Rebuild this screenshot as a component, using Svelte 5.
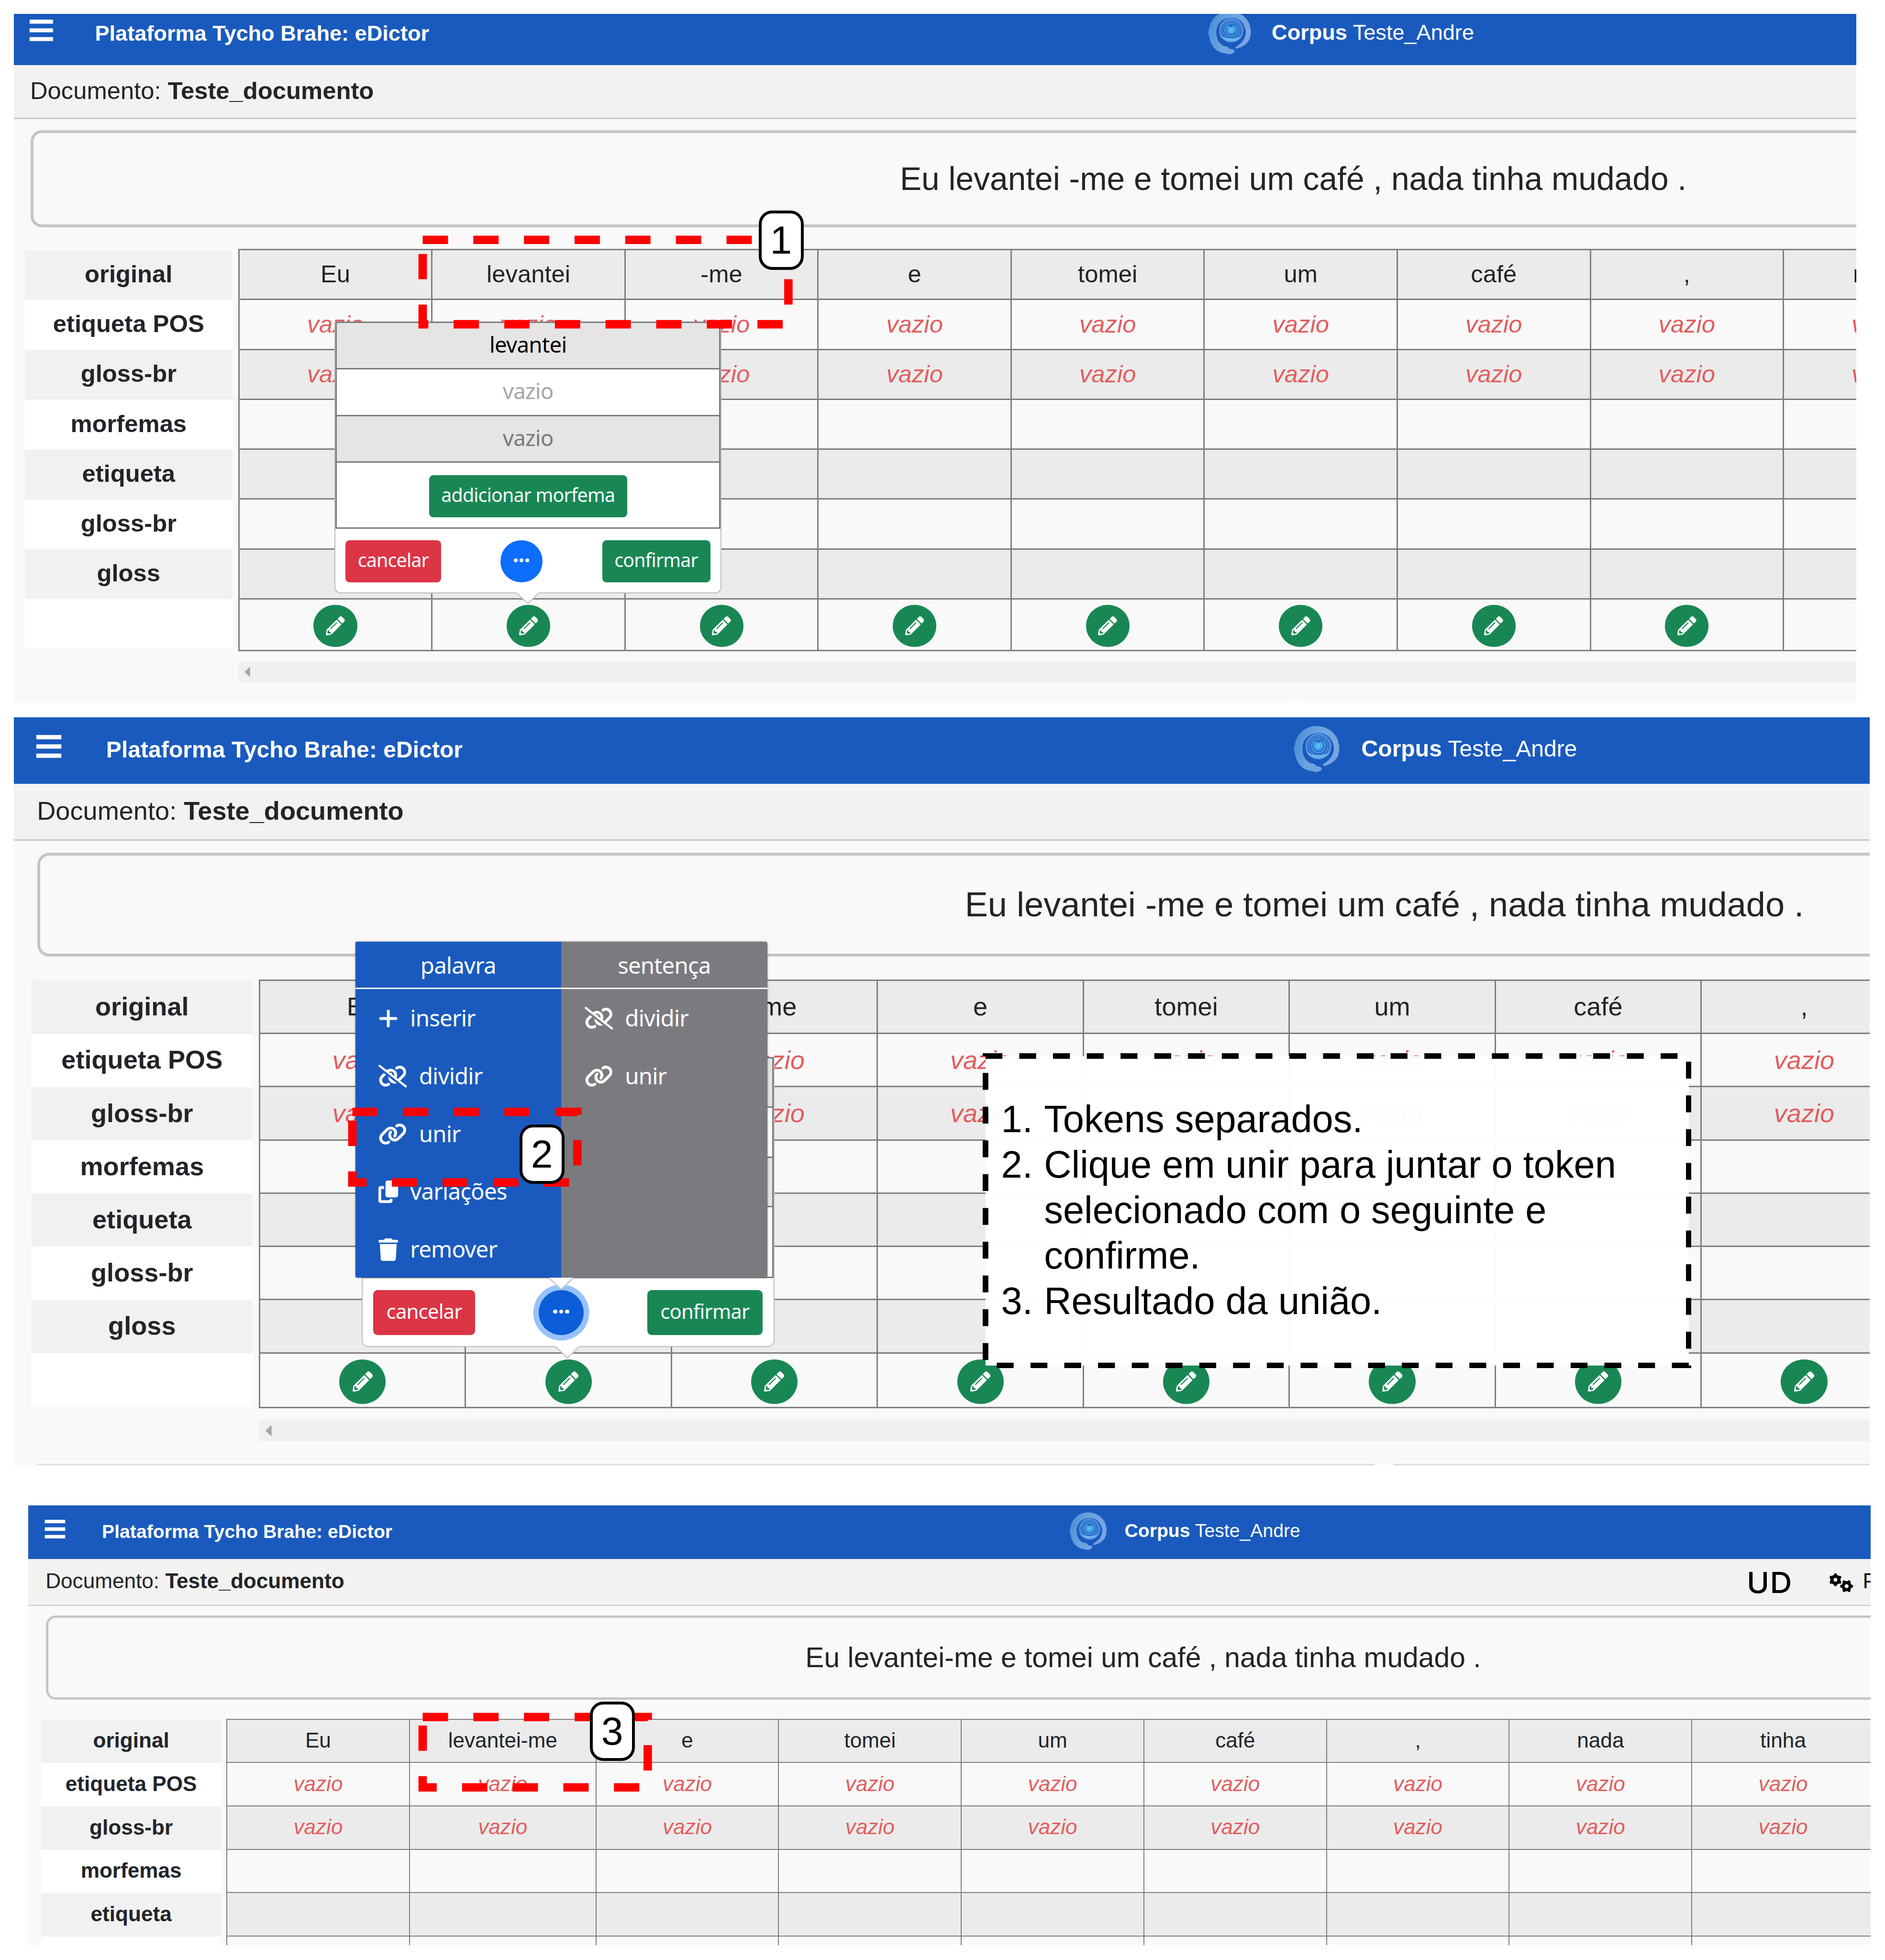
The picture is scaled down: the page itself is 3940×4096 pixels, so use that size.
<script>
  const rows = ['original', 'etiqueta POS', 'gloss-br', 'morfemas', 'etiqueta', 'gloss-br', 'gloss', ''];
  const split = ['Eu', 'levantei', '-me', 'e', 'tomei', 'um', 'café', ',', 'nada'];
  const joined = ['Eu', 'levantei-me', 'e', 'tomei', 'um', 'café', ',', 'nada', 'tinha'];

  const panels = [
    { id: 'first', sentence: 'Eu levantei -me e tomei um café , nada tinha mudado .', tokens: split, popup: true },
    { id: 'second', sentence: 'Eu levantei -me e tomei um café , nada tinha mudado .', tokens: split, popup: true, menu: true },
    { id: 'third', sentence: 'Eu levantei-me e tomei um café , nada tinha mudado .', tokens: joined, tools: true }
  ];

  const menuWord = [
    ['plus', 'inserir'],
    ['unlink', 'dividir'],
    ['link', 'unir'],
    ['copy', 'variações'],
    ['trash', 'remover']
  ];
  const menuSentence = [
    ['unlink', 'dividir'],
    ['link', 'unir']
  ];

  const linkPath =
    'M579.8 267.7c56.5-56.5 56.5-148 0-204.5c-50-50-128.8-56.5-186.3-15.4l-1.6 1.1c-14.4 10.3-17.7 30.3-7.4 44.6s30.3 17.7 44.6 7.4l1.6-1.1c32.1-22.9 76-19.3 103.8 8.6c31.5 31.5 31.5 82.5 0 114L422.3 334.8c-31.5 31.5-82.5 31.5-114 0c-27.9-27.9-31.5-71.8-8.6-103.8l1.1-1.6c10.3-14.4 6.9-34.4-7.4-44.6s-34.4-6.9-44.6 7.4l-1.1 1.6C206.5 251.2 213 330 263 380c56.5 56.5 148 56.5 204.5 0L579.8 267.7zM60.2 244.3c-56.5 56.5-56.5 148 0 204.5c50 50 128.8 56.5 186.3 15.4l1.6-1.1c14.4-10.3 17.7-30.3 7.4-44.6s-30.3-17.7-44.6-7.4l-1.6 1.1c-32.1 22.9-76 19.3-103.8-8.6C74 372 74 321 105.5 289.5L217.7 177.2c31.5-31.5 82.5-31.5 114 0c27.9 27.9 31.5 71.8 8.6 103.9l-1.1 1.6c-10.3 14.4-6.9 34.4 7.4 44.6s34.4 6.9 44.6-7.4l1.1-1.6C433.5 260.8 427 182 377 132c-56.5-56.5-148-56.5-204.5 0L60.2 244.3z';

  const marks = [
    { x: 1202, y: 682, w: 1040, h: 240 },
    { x: 1002, y: 3161.5, w: 640, h: 200.5 },
    { x: 1202, y: 4882, w: 640, h: 200 }
  ];

  const teeth = [0, 60, 120, 180, 240, 300];
</script>

{#snippet icon(name)}
  {#if name === 'plus'}
    <svg class="ico" viewBox="0 0 448 512"><path d="M256 80c0-17.7-14.3-22-32-22s-32 4.3-32 22V224H48c-17.7 0-32 14.3-32 32s14.3 32 32 32H192V432c0 17.7 14.3 22 32 22s32-4.3 32-22V288H400c17.7 0 32-14.3 32-32s-14.3-32-32-32H256V80z" /></svg>
  {:else if name === 'copy'}
    <svg class="ico" viewBox="0 0 448 512"><path d="M208 0H332.1c12.7 0 24.9 5.1 33.9 14.1l67.9 67.9c9 9 14.1 21.2 14.1 33.9V336c0 26.5-21.5 48-48 48H208c-26.5 0-48-21.5-48-48V48c0-26.5 21.5-48 48-48zM48 128h80v64H64V448H256V416h64v48c0 26.5-21.5 48-48 48H48c-26.5 0-48-21.5-48-48V176c0-26.5 21.5-48 48-48z" /></svg>
  {:else if name === 'trash'}
    <svg class="ico" viewBox="0 0 448 512"><path d="M135.2 17.7L128 32H32C14.3 32 0 46.3 0 64S14.3 96 32 96H416c17.7 0 32-14.3 32-32s-14.3-32-32-32H320l-7.2-14.3C307.4 6.8 296.3 0 284.2 0H163.8c-12.1 0-23.2 6.8-28.6 17.7zM416 128H32L53.2 467c1.6 25.3 22.6 45 47.9 45H346.9c25.3 0 46.3-19.7 47.9-45L416 128z" /></svg>
  {:else}
    <svg class="ico wide" viewBox="0 0 640 512">
      <path d={linkPath} />
      {#if name === 'unlink'}
        <path class="halo" d="M2 56L592 520" />
        <path class="slash" d="M24 24L616 488" />
      {/if}
    </svg>
  {/if}
{/snippet}

{#snippet tip()}
  <svg class="tip" viewBox="0 0 66 34"><path class="tipfill" d="M0 0L33 31L66 0z" /><path class="tipline" d="M1 1L33 31.5L65 1" /></svg>
{/snippet}

{#snippet gear(x, y, turn)}
  <g transform="translate({x} {y}) rotate({turn})">
    <circle r="11.5" fill="none" stroke="#000" stroke-width="10.5" />
    {#each teeth as a}
      <rect x="-4.5" y="-21" width="9" height="8" rx="3" transform="rotate({a})" />
    {/each}
  </g>
{/snippet}

<main class="stage">
  {#each panels as p}
    <section class="panel {p.id}">
      <div class="view">
        <header class="topbar">
          <svg class="burger" viewBox="0 0 70 64"><path d="M0 6H70M0 32H70M0 58H70" /></svg>
          <span class="title">Plataforma Tycho Brahe: eDictor</span>
          <svg class="logo" viewBox="0 0 510 510">
            <defs>
              <linearGradient id="sw-{p.id}" x1="0" y1="0" x2="1" y2="0.3">
                <stop offset="0" stop-color="#4489d2" />
                <stop offset="0.5" stop-color="#6ba3e0" />
                <stop offset="1" stop-color="#7ba3e2" />
              </linearGradient>
              <radialGradient id="core-{p.id}">
                <stop offset="0" stop-color="#6cc4f2" />
                <stop offset="0.7" stop-color="#35a0e6" />
                <stop offset="1" stop-color="#3d8bd8" stop-opacity="0" />
              </radialGradient>
            </defs>
            <path
              fill="url(#sw-{p.id})"
              d="M298 425C290 440 262 452 245 450C225 442 205 444 180 436C120 418 78 365 68 290C62 270 52 250 66 222C80 120 160 58 252 58C355 60 430 130 440 205C452 235 445 290 432 318C410 360 365 388 318 398C300 398 302 388 320 375C370 345 402 300 400 240C390 165 340 118 268 118C190 118 135 170 132 245C130 310 158 355 200 375C225 375 245 385 252 402C270 404 290 402 298 425z"
            />
            <circle cx="268" cy="232" r="102" fill="none" stroke="#4f90dc" stroke-width="18" />
            <circle cx="268" cy="230" r="80" fill="none" stroke="#4488d8" stroke-width="14" />
            <circle cx="268" cy="228" r="58" fill="none" stroke="#4a93de" stroke-width="14" />
            <path d="M165 275C195 345 330 360 368 275C340 310 215 320 165 275z" fill="#6cb2ec" />
            <circle cx="268" cy="225" r="54" fill="url(#core-{p.id})" />
            <path d="M240 178H305V188H278V200H254V188H240z" fill="#1f63c4" />
          </svg>
          <span class="corpus"><b>Corpus</b> Teste_Andre</span>
        </header>

        <div class="docbar">
          <span>Documento: <b>Teste_documento</b></span>
          {#if p.tools}
            <span class="ud">UD</span>
            <svg class="gears" viewBox="0 0 80 66">
              {@render gear(21, 22.5, 0)}
              {@render gear(57.5, 43.5, 30)}
            </svg>
            <span class="pref">P</span>
          {/if}
        </div>

        <div class="sentence">{p.sentence}</div>

        <div class="board">
          <div class="labels">
            {#each rows as r}
              <div class="label">{r}</div>
            {/each}
          </div>
          <div class="tablewrap">
            <div class="table">
              {#each p.tokens as t}
                <div class="col" class:long={t === 'levantei-me'}>
                  <div class="cell">{t}</div>
                  <div class="cell empty">vazio</div>
                  <div class="cell empty">vazio</div>
                  <div class="cell"></div>
                  <div class="cell"></div>
                  <div class="cell"></div>
                  <div class="cell"></div>
                  <div class="cell action">
                    <span class="edit">
                      <svg viewBox="0 0 512 512"><path d="M497.9 142.1l-46.1 46.1c-4.7 4.7-12.3 4.7-17 0l-111-111c-4.7-4.7-4.7-12.3 0-17l46.1-46.1c18.7-18.7 49.1-18.7 67.9 0l60.1 60.1c18.8 18.7 18.8 49.1 0 67.9zM284.2 99.8L21.6 362.4.4 483.9c-2.9 16.4 11.4 30.6 27.8 27.8l121.5-21.3 262.6-262.6c4.7-4.7 4.7-12.3 0-17l-111-111c-4.8-4.7-12.4-4.7-17.1 0zM124.1 339.9c-5.5-5.5-5.5-14.3 0-19.8l154-154c5.5-5.5 14.3-5.5 19.8 0s5.5 14.3 0 19.8l-154 154c-5.5 5.5-14.3 5.5-19.8 0zM88 424h48v36.3l-64.5 11.3-31.1-31.1L51.7 376H88v48z" /></svg>
                    </span>
                  </div>
                </div>
              {/each}
            </div>
            <div class="scroll"><svg viewBox="0 0 16 30"><path d="M16 0V30L0 15z" /></svg></div>

            {#if p.popup}
              <div class="popup">
                <div class="prow head">levantei</div>
                <div class="prow light">vazio</div>
                <div class="prow dim">vazio</div>
                <div class="prow add"><span class="btn ok">addicionar morfema</span></div>
                <div class="foot">
                  <span class="btn no">cancelar</span>
                  <span class="more" class:focused={p.menu}><i></i><i></i><i></i></span>
                  <span class="btn ok">confirmar</span>
                </div>
                {@render tip()}
              </div>
            {/if}

            {#if p.menu}
              <div class="menu">
                <div class="side word">
                  <div class="mhead">palavra</div>
                  {#each menuWord as [i, label]}
                    <div class="item">{@render icon(i)}<span>{label}</span></div>
                  {/each}
                </div>
                <div class="side sent">
                  <div class="mhead">sentença</div>
                  {#each menuSentence as [i, label]}
                    <div class="item">{@render icon(i)}<span>{label}</span></div>
                  {/each}
                </div>
                {@render tip()}
              </div>
            {/if}
          </div>
        </div>
        <div class="nextbox"><span></span></div>
      </div>
    </section>
  {/each}

  <svg class="marks" viewBox="0 0 5360 5572">
    {#each marks as m}
      <path d="M{m.x} {m.y}h{m.w}v{m.h}h{-m.w}z" />
    {/each}
  </svg>

  <aside class="note">
    <svg viewBox="0 0 2016 896"><path d="M8 8H2008V888H8z" /></svg>
    <ol>
      <li><span>1.</span><span>Tokens separados.</span></li>
      <li><span>2.</span><span>Clique em unir para juntar o token<br />selecionado com o seguinte e<br />confirme.</span></li>
      <li><span>3.</span><span>Resultado da união.</span></li>
    </ol>
  </aside>

  <div class="badge b1">1</div>
  <div class="badge b2">2</div>
  <div class="badge b3">3</div>
</main>

<style>
  :global(body) {
    margin: 0;
    background: #fff;
    overflow: hidden;
  }

  .stage {
    position: relative;
    zoom: 0.735;
    width: 5360px;
    height: 5572px;
    overflow: hidden;
    background: #fff;
    font-family: 'Liberation Sans', Arial, sans-serif;
    color: #212529;
  }

  .stage * {
    box-sizing: border-box;
  }

  .panel {
    overflow: hidden;
    background: #f9f9f9;
  }

  .first {
    width: 5239px;
    height: 1959px;
    margin: 40px 0 41px 40px;
  }

  .second {
    width: 5277px;
    height: 2128px;
    margin: 0 0 112px 40px;
  }

  .third {
    width: 5240px;
    height: 1250px;
    margin-left: 80px;
  }

  .view {
    width: 7400px;
    padding-left: 62px;
  }

  .first .view {
    margin: -30.7px 0 0 -15.4px;
  }

  .second .view {
    zoom: 1.0667;
  }

  .third .view {
    zoom: 0.869;
    margin-left: -4px;
  }

  .topbar {
    display: flex;
    align-items: flex-start;
    height: 176.2px;
    margin-left: -62px;
    padding-left: 58px;
    background: #1a5abe;
    color: #fff;
    font-size: 61.4px;
    line-height: 70.7px;
    white-space: nowrap;
  }

  .burger {
    flex: none;
    width: 69px;
    height: 61px;
    margin-top: 47px;
  }

  .burger path {
    stroke: #fff;
    stroke-width: 12;
  }

  .title {
    flex: none;
    width: 3148px;
    margin: 50.5px 0 0 118.5px;
    font-weight: 700;
  }

  .logo {
    flex: none;
    width: 159.4px;
    height: 159.4px;
    margin-top: 4.7px;
  }

  .corpus {
    margin: 48px 0 0 39px;
  }

  .docbar {
    display: flex;
    height: 153px;
    margin-left: -62px;
    padding: 33px 0 0 61px;
    background: #f3f2f0;
    border-bottom: 4.2px solid #c9c8c6;
    font-size: 69.1px;
    line-height: 79.6px;
    white-space: nowrap;
  }

  .ud {
    width: 160px;
    margin-left: 4589px;
    font: 500 95px/90px Inter, sans-serif;
    letter-spacing: 2px;
    color: #000;
    transform: scaleX(1.05);
    transform-origin: left;
  }

  .gears {
    width: 80px;
    height: 66px;
    margin: 12px 0 0 110px;
  }

  .pref {
    margin-left: 30px;
    color: #000;
  }

  .sentence {
    width: 7182px;
    height: 276.5px;
    margin-top: 31px;
    padding-top: 77.5px;
    border: 8.2px solid #c6c5c4;
    border-radius: 32px;
    font-size: 92.1px;
    line-height: 106px;
    text-align: center;
    white-space: nowrap;
  }

  .board {
    display: flex;
    margin: 61.5px 0 0 -15.8px;
  }

  .labels {
    width: 589.8px;
    padding-top: 3.5px;
    margin-right: 16.6px;
  }

  .label {
    height: 141.8px;
    padding-top: 29px;
    background: #fff;
    font-size: 69.1px;
    font-weight: 700;
    line-height: 79.6px;
    text-align: center;
  }

  .label:nth-child(odd) {
    background: #f1f1f1;
  }

  .tablewrap {
    position: relative;
    width: 6600px;
  }

  .table {
    display: flex;
    border-left: 4.2px solid #7f7f82;
    border-top: 4.2px solid #7f7f82;
  }

  .col {
    flex: none;
    width: 549.05px;
  }

  .third .col {
    width: 597.7px;
  }

  .third .col.long {
    width: 610.5px;
  }

  .cell {
    height: 141.9px;
    padding-top: 29px;
    border-right: 4.2px solid #7f7f82;
    border-bottom: 4.2px solid #7f7f82;
    font-size: 69.1px;
    line-height: 79.6px;
    text-align: center;
  }

  .cell:nth-child(odd) {
    background: #ebebeb;
  }

  .cell:nth-child(even) {
    background: #f9f9f9;
  }

  .empty {
    color: #e35d5d;
    font-style: italic;
  }

  .action {
    display: flex;
    justify-content: center;
    height: 146.6px;
    padding-top: 15.5px;
  }

  .edit {
    display: flex;
    align-items: center;
    justify-content: center;
    width: 124px;
    height: 119.5px;
    border-radius: 50%;
    background: #198754;
  }

  .edit svg {
    width: 54px;
    height: 54px;
    fill: #fff;
  }

  .scroll {
    height: 57px;
    margin-top: 30px;
    padding: 14px 0 0 18px;
    background: #f0f0f0;
  }

  .scroll svg {
    display: block;
    width: 16px;
    height: 30px;
    fill: #a3a3a3;
  }

  .nextbox {
    width: 7180px;
    height: 60px;
    margin-top: 61px;
    border-top: 4.2px solid #dedede;
    text-align: center;
  }

  .nextbox span {
    display: block;
    width: 50px;
    height: 12px;
    margin: -6px auto 0;
    background: #fdfdfd;
  }

  .popup {
    position: absolute;
    left: 274.5px;
    top: 207.5px;
    width: 1100px;
    height: 772.5px;
    background: #fff;
    border: 3px solid #bdbdbd;
    border-radius: 4px 4px 18px 18px;
    border-top: 0;
    font-family: 'Noto Sans', sans-serif;
    font-size: 62px;
    letter-spacing: -1px;
    text-align: center;
  }

  .prow {
    height: 134px;
    border: solid #7c7c80;
    border-width: 4.2px 4.2px 0;
    line-height: 120px;
  }

  .head {
    height: 131px;
    background: #e5e5e5;
    color: #000;
  }

  .light {
    color: #a6a6a6;
  }

  .dim {
    height: 131px;
    background: #e5e5e5;
    color: #7a7a7a;
  }

  .add {
    display: flex;
    align-items: center;
    justify-content: center;
    height: 193px;
    padding-top: 7px;
    border-bottom-width: 4.2px;
  }

  .btn {
    height: 119.5px;
    padding: 0 35px;
    border-radius: 12px;
    color: #fff;
    font-size: 53.5px;
    letter-spacing: -1.1px;
    line-height: 112px;
    white-space: nowrap;
  }

  .ok {
    background: #198754;
  }

  .no {
    background: #dc3545;
  }

  .foot {
    display: flex;
    justify-content: space-between;
    padding: 32px 29px 0 28px;
  }

  .more {
    display: flex;
    align-items: center;
    justify-content: center;
    gap: 5px;
    width: 120px;
    height: 119.5px;
    padding-bottom: 5px;
    border-radius: 50%;
    background: #0d6efd;
  }

  .more i {
    width: 11px;
    height: 11px;
    border-radius: 50%;
    background: #fff;
  }

  .focused {
    background: #0b5ed7;
    box-shadow: 0 0 0 14.5px #98c1fe;
  }

  .tip {
    position: absolute;
    left: 513px;
    bottom: -34px;
    width: 66px;
    height: 34px;
  }

  .tipfill {
    fill: #fff;
  }

  .tipline {
    fill: none;
    stroke: #c4c4c4;
    stroke-width: 3;
  }

  .menu {
    position: absolute;
    left: 257px;
    top: -100px;
    display: flex;
    width: 1098.3px;
    height: 894.5px;
    border-radius: 6px;
    box-shadow: 0 0 4px 1px rgba(0, 0, 0, 0.3);
    font-family: 'Noto Sans', sans-serif;
    font-size: 60.5px;
    letter-spacing: -1.1px;
    color: #fff;
  }

  .menu .tip {
    left: 516px;
  }

  .side {
    width: 50%;
  }

  .word {
    --panel: #1a5abe;
    background: #1a5abe;
    border-radius: 4px 0 0 4px;
  }

  .sent {
    --panel: #7b7a7f;
    background: #7b7a7f;
    border-radius: 0 6px 6px 0;
  }

  .mhead {
    height: 126px;
    border-bottom: 4.2px solid #fff;
    line-height: 126px;
    text-align: center;
  }

  .item {
    display: flex;
    align-items: center;
    gap: 32px;
    height: 154px;
    padding-left: 62px;
    line-height: 154px;
  }

  .ico {
    flex: none;
    width: 52.5px;
    height: 60px;
    margin-top: 2px;
    fill: #fff;
    overflow: visible;
  }

  .wide {
    width: 76px;
    height: 61px;
  }

  .halo {
    stroke: var(--panel);
    stroke-width: 56;
  }

  .slash {
    stroke: #fff;
    stroke-width: 46;
    stroke-linecap: round;
  }

  .marks {
    position: absolute;
    left: 0;
    top: 0;
    width: 5360px;
    height: 5572px;
  }

  .marks path {
    fill: none;
    stroke: #f00;
    stroke-width: 24;
    stroke-dasharray: 72 72;
  }

  .note {
    position: absolute;
    left: 2794px;
    top: 2994px;
    width: 2016px;
    height: 896px;
    color: #000;
    font-size: 108px;
    line-height: 129.2px;
  }

  .note svg {
    position: absolute;
    left: 0;
    top: 0;
    width: 2016px;
    height: 896px;
  }

  .note path {
    fill: #fff;
    fill-opacity: 0.97;
    stroke: #000;
    stroke-width: 16;
    stroke-dasharray: 48 48;
  }

  .note ol {
    position: relative;
    margin: 0;
    padding: 125px 0 0 53px;
    list-style: none;
    white-space: nowrap;
  }

  .note li {
    display: grid;
    grid-template-columns: 122px 1fr;
  }

  .badge {
    position: absolute;
    width: 128px;
    height: 169px;
    border: 8.2px solid #000;
    border-radius: 38px;
    background: #fff;
    color: #000;
    font-size: 112px;
    line-height: 150px;
    text-align: center;
    text-indent: -2px;
  }

  .b1 {
    left: 2158px;
    top: 598px;
  }

  .b2 {
    left: 1478px;
    top: 3197px;
  }

  .b3 {
    left: 1678px;
    top: 4838px;
  }
</style>
